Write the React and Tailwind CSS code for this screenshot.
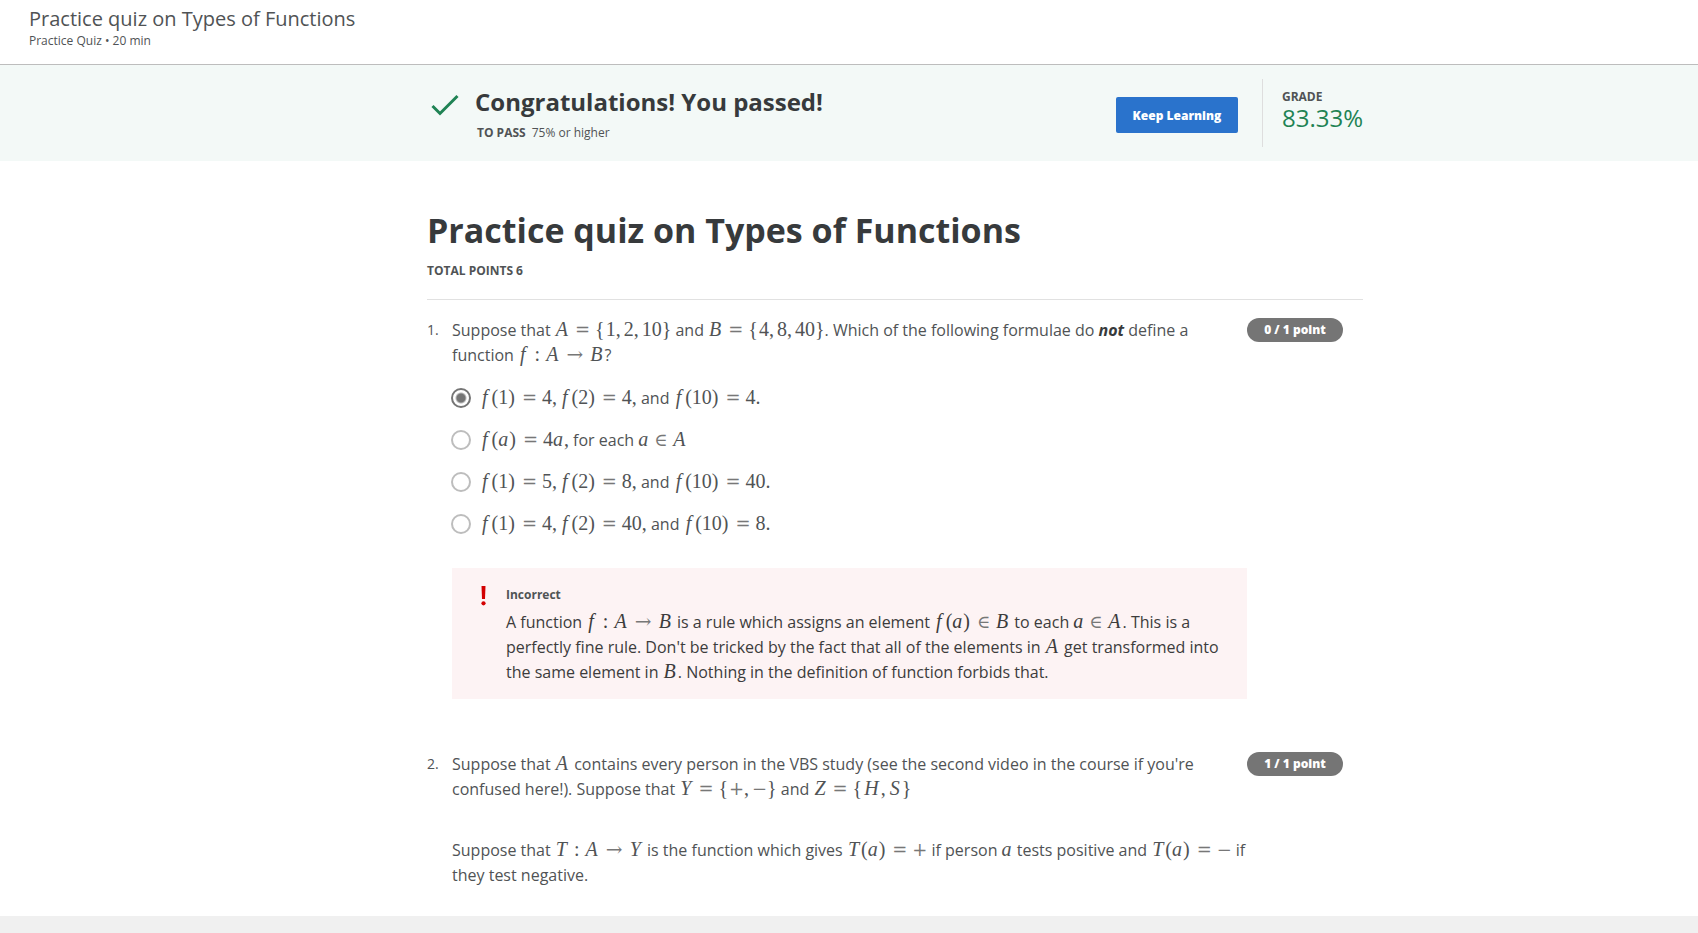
import { useState } from "react";

const OPERATORS = {
  "=": "inline-block w-[15px] mx-[5px] text-center text-[18px]",
  "→": "inline-block w-[19px] mx-[5px] text-center text-[20px]",
  "∈": "inline-block w-[13px] mx-[5px] text-center text-[18px]",
  "+": "inline-block w-[15px] text-center text-[18px]",
  "−": "inline-block w-[15px] text-center text-[18px]",
};

function Token({ char, last }) {
  if (OPERATORS[char]) {
    return (
      <span className={OPERATORS[char]}>
        <span className="font-['DejaVu_Serif',serif] text-[#777]">{char}</span>
      </span>
    );
  }
  if (char === ":") return <span className="mx-[5px]">:</span>;
  if (char === "," && !last) return <span className="mr-[3px]">,</span>;
  if (char === ")" && !last) return <span className="mr-[2px]">)</span>;
  if (char === "{") return <span className="mr-px">{char}</span>;
  if (char === "f") return <i className="ml-[2px] mr-[4px]">f</i>;
  if (/[A-Z]/.test(char)) return <i className="ml-px mr-[2px]">{char}</i>;
  if (/[a-z]/.test(char)) return <i className="mr-px">{char}</i>;
  return char;
}

function M({ t }) {
  const chars = [...t.replaceAll(" ", "")];
  return (
    <span className="whitespace-nowrap font-['Liberation_Serif',serif] text-[20px] leading-none">
      {chars.map((char, i) => (
        <Token key={i} char={char} last={i === chars.length - 1} />
      ))}
    </span>
  );
}

const CHOICES = [
  <><M t="f(1) = 4, f(2) = 4," /> and <M t="f(10) = 4." /></>,
  <><M t="f(a) = 4a," /> for each <M t="a ∈ A" /></>,
  <><M t="f(1) = 5, f(2) = 8," /> and <M t="f(10) = 40." /></>,
  <><M t="f(1) = 4, f(2) = 40," /> and <M t="f(10) = 8." /></>,
];

function Question({ number, score, children }) {
  return (
    <li className="flex items-start pr-5">
      <span className="w-[25px] shrink-0 text-[14px] leading-6">{number}.</span>
      <div className="min-w-0 flex-1">{children}</div>
      <span className="w-24 shrink-0 rounded-full bg-[#757575] text-center text-[12px] font-extrabold leading-6 text-white">
        {score}
      </span>
    </li>
  );
}

export default function App() {
  const [choice, setChoice] = useState(0);

  return (
    <div className="flex min-h-screen flex-col bg-white font-['Open_Sans',sans-serif] text-[16px] leading-[25px] text-[#505355]">
      <header className="border-b border-[#bdbdbd] px-[29px] pb-[15px] pt-[5px]">
        <div className="text-[20px] leading-7">Practice quiz on Types of Functions</div>
        <div className="text-[12px] leading-4">Practice Quiz • 20 min</div>
      </header>

      <section className="bg-[#f3f9f7] pl-[92px]">
        <div className="mx-auto flex h-24 max-w-[936px] items-center">
          <svg className="-mt-4 ml-1 mr-4 h-7 w-7 shrink-0" viewBox="0 0 28 28" fill="none" stroke="#1f8354" strokeWidth="3" aria-hidden="true">
            <path d="M1.5 15 L9 22.5 L26.5 5" />
          </svg>
          <div className="flex-1 pt-[5px]">
            <h2 className="text-[24px] font-bold leading-8 text-[#373a3c]">Congratulations! You passed!</h2>
            <p className="mt-[3px] pl-[2px] text-[12px] leading-6">
              <b className="mr-[6px] font-bold">TO PASS</b>75% or higher
            </p>
          </div>
          <button type="button" className="mr-6 mt-1 h-9 w-[122px] rounded-[2px] bg-[#2a73cc] text-[12px] font-extrabold text-white">
            Keep Learning
          </button>
          <div className="h-[68px] border-l border-[#dedede] pl-[19px] pt-2">
            <div className="text-[12px] font-bold leading-5">GRADE</div>
            <div className="text-[24px] leading-[22px] text-[#1f8354]">83.33%</div>
          </div>
        </div>
      </section>

      <main className="pb-7 pl-[92px]">
        <div className="mx-auto max-w-[936px]">
          <div className="border-b border-[#e1e1e1] pb-4 pt-[47px]">
            <h1 className="text-[34px] font-bold leading-[44px] text-[#373a3c]">Practice quiz on Types of Functions</h1>
            <p className="mt-[7px] text-[12px] font-bold leading-6">TOTAL POINTS 6</p>
          </div>

          <ol className="flex flex-col gap-[53px] pt-[18px]">
            <Question number={1} score="0 / 1 point">
              <p>
                Suppose that <M t="A = {1,2,10}" /> and <M t="B = {4,8,40}" />. Which of the following formulae do{" "}
                <strong className="font-bold italic text-[#373a3c]">not</strong> define a function <M t="f : A → B" />?
              </p>
              <div role="radiogroup" aria-label="Question 1" className="flex flex-col gap-[17px] pt-[18px]">
                {CHOICES.map((label, i) => (
                  <label key={i} className="flex items-center gap-[9px]">
                    <input
                      type="radio"
                      name="question-1"
                      checked={choice === i}
                      onChange={() => setChoice(i)}
                      className="-ml-px mb-[2px] h-5 w-5 shrink-0 appearance-none rounded-full border-2 border-[#bdbdbd] checked:border-[#757575] checked:bg-[radial-gradient(circle,#757575_4px,transparent_6px)]"
                    />
                    <span>{label}</span>
                  </label>
                ))}
              </div>
              <div className="mt-[31px] flex bg-[#fdf3f4] pb-[14px] pl-[29px] pr-5 pt-[15px] text-[#3c3c3c]">
                <svg className="mt-[3px] mr-5 h-5 w-[5px] shrink-0" viewBox="0 0 5 20" fill="#d30001" aria-hidden="true">
                  <path d="M0.5 0 H4.5 L4 13 H1 Z" />
                  <circle cx="2.5" cy="17.3" r="2.1" />
                </svg>
                <div>
                  <h3 className="mb-[3px] text-[12px] font-bold leading-6 text-[#505355]">Incorrect</h3>
                  <p>
                    A function <M t="f : A → B" /> is a rule which assigns an element <M t="f(a) ∈ B" /> to each{" "}
                    <M t="a ∈ A" />. This is a perfectly fine rule. Don't be tricked by the fact that all of the elements in{" "}
                    <M t="A" /> get transformed into the same element in <M t="B" />. Nothing in the definition of function
                    forbids that.
                  </p>
                </div>
              </div>
            </Question>

            <Question number={2} score="1 / 1 point">
              <p>
                Suppose that <M t="A" /> contains every person in the VBS study (see the second video in the course if you're
                confused here!). Suppose that <M t="Y = {+,−}" /> and <M t="Z = {H,S}" />
              </p>
              <p className="mt-9">
                Suppose that <M t="T : A → Y" /> is the function which gives <M t="T(a) = +" /> if person <M t="a" /> tests
                positive and <M t="T(a) = −" /> if they test negative.
              </p>
            </Question>
          </ol>
        </div>
      </main>

      <footer className="min-h-[19px] flex-1 bg-[#f0f0f0]" />
    </div>
  );
}
